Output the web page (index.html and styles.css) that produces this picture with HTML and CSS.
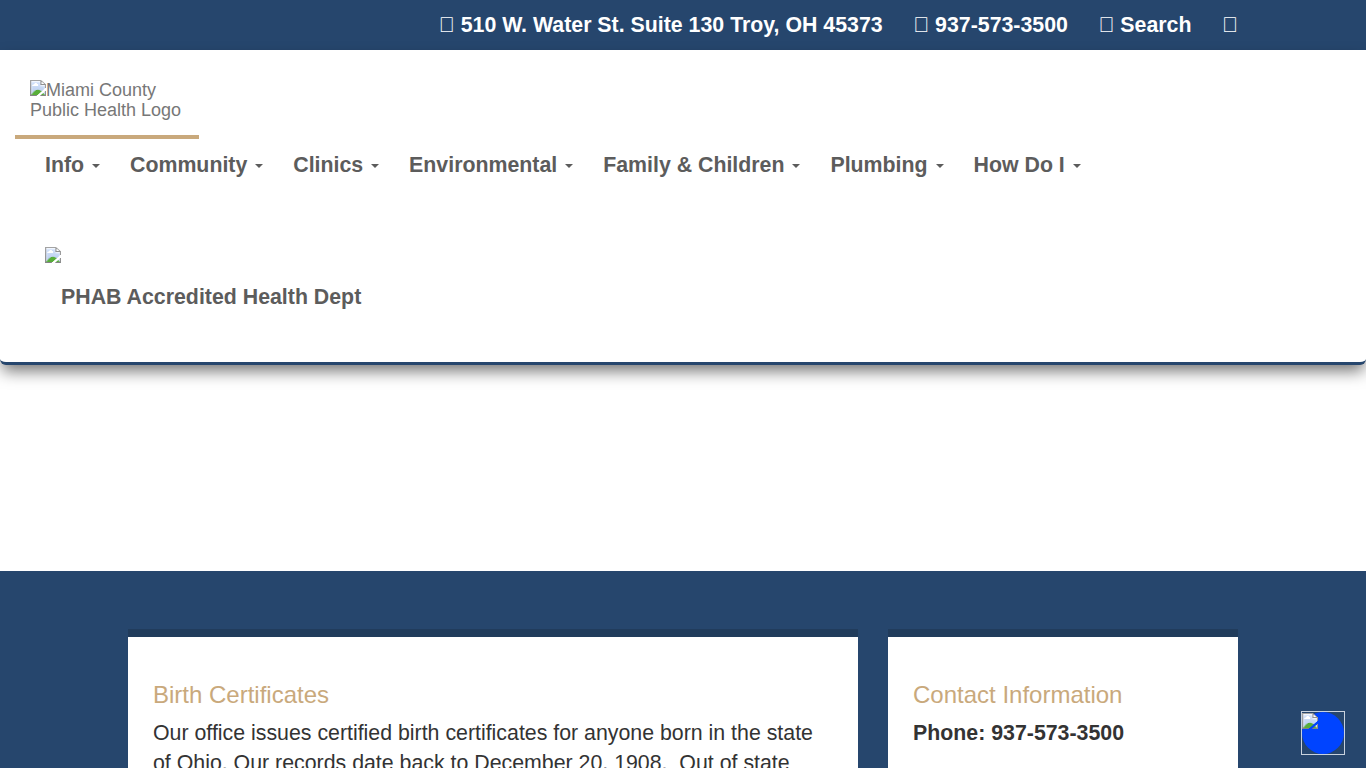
FILE: index.html
```html
<!DOCTYPE html>
<html lang="en">
<head>
<meta charset="utf-8">
<title>Birth Certificates - Miami County Public Health</title>
<link rel="stylesheet" href="styles.css">
</head>
<body>
<div class="topbar">
  <div class="topbar-inner">
    <a class="top-link"><span class="tofu">&#xf041;</span> 510 W. Water St. Suite 130 Troy, OH 45373</a>
    <a class="top-link"><span class="tofu">&#xf095;</span> 937-573-3500</a>
    <a class="top-link"><span class="tofu">&#xf002;</span> Search</a>
    <a class="top-link"><span class="tofu">&#xf09a;</span></a>
  </div>
</div>
<header class="site-header">
  <div class="logo"><img class="logo-img" src="logo.png" alt="Miami County Public Health Logo"></div>
  <nav class="nav">
    <a class="nav-item">Info <span class="caret"></span></a>
    <a class="nav-item">Community <span class="caret"></span></a>
    <a class="nav-item">Clinics <span class="caret"></span></a>
    <a class="nav-item">Environmental <span class="caret"></span></a>
    <a class="nav-item">Family &amp; Children <span class="caret"></span></a>
    <a class="nav-item">Plumbing <span class="caret"></span></a>
    <a class="nav-item">How Do I <span class="caret"></span></a>
  </nav>
  <div class="phab">
    <div class="phab-img-row"><img class="phab-img" src="phab.png" alt=" "></div>
    <div class="phab-text">PHAB Accredited Health Dept</div>
  </div>
</header>
<div class="spacer"></div>
<main class="content">
  <div class="content-inner">
    <section class="card card-main">
      <h2 class="card-title">Birth Certificates</h2>
      <p class="card-text">Our office issues certified birth certificates for anyone born in the state of Ohio. Our records date back to December 20, 1908.&nbsp; Out of state</p>
    </section>
    <aside class="card card-side">
      <h2 class="card-title">Contact Information</h2>
      <p class="card-text"><strong>Phone: 937-573-3500</strong></p>
    </aside>
  </div>
</main>
<div class="a11y-widget"><img class="a11y-img" src="a11y.png" alt=" "></div>
</body>
</html>
```
FILE: styles.css
```css
* { box-sizing: border-box; }
html, body { margin: 0; height: 768px; overflow: hidden; }
body { font-family: "Liberation Sans", Arial, sans-serif; font-size: 21.33px; color: #333; background: #fff; }

.topbar { height: 50px; background: #26466d; color: #fff; }
.topbar-inner { width: 1110px; height: 50px; margin-left: 128px; display: flex; justify-content: flex-end; align-items: center; gap: 30.5px; font-weight: 700; font-size: 21.33px; }
.tofu { font-weight: 400; }

.site-header { height: 315px; background: #fff; border-bottom: 3px solid #26466d; border-radius: 0 0 6px 6px; box-shadow: 0 8px 16px -2px rgba(0,0,0,.55); position: relative; }
.logo { width: 184px; height: 89px; margin-left: 15px; padding: 30px 15px 0; border-bottom: 4px solid #c9a97c; color: #777; font-size: 18px; line-height: 20px; }
.nav { display: flex; height: 52px; padding-left: 45px; align-items: center; }
.nav-item { padding-right: 30px; font-size: 21.33px; font-weight: 700; color: #5c5c5c; white-space: nowrap; }
.caret { display: inline-block; width: 0; height: 0; margin-left: 2px; vertical-align: middle; border-top: 4px solid #5c5c5c; border-left: 4px solid transparent; border-right: 4px solid transparent; }
.phab { padding: 56px 0 0 45px; }
.phab-img-row { height: 16px; line-height: 16px; }
.phab-text { margin: 20px 0 0 16px; font-size: 21.33px; line-height: 28px; font-weight: 700; color: #5c5c5c; }

.spacer { height: 206px; }
.content { height: 197px; background: #26466d; padding: 58px 0 0 128px; }
.content-inner { display: flex; gap: 30px; align-items: flex-start; }
.card { background: #fff; border-top: 8px solid #213c5c; padding: 44px 25px 0; height: 300px; }
.card-main { width: 730px; }
.card-side { width: 350px; }
.card-title { margin: 0 0 10px; font-size: 24px; line-height: 28px; font-weight: 400; color: #c9a97c; }
.card-text { margin: 0; font-size: 21.33px; line-height: 29.87px; color: #333; }

.a11y-widget { position: fixed; left: 1301px; top: 711px; width: 44px; height: 44px; border: 1px solid #c8d2de; background: #26466d; line-height: 16px; }
.a11y-widget::before { content: ""; position: absolute; inset: 0; border-radius: 50%; background: #0044ff; }
.a11y-img { position: relative; vertical-align: top; margin-top: 1px; }
```
